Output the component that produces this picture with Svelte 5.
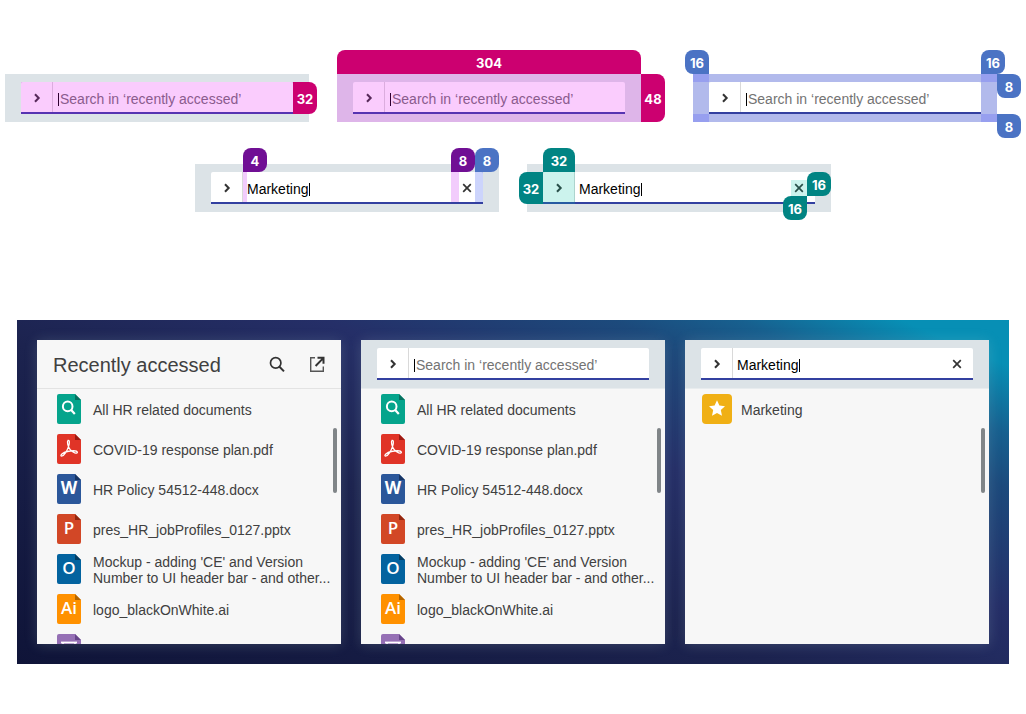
<script>
  const documents = [
    { kind: 'search', color: '#05a48c', fold: '#06705f', label: 'All HR related documents' },
    { kind: 'pdf', color: '#e03427', fold: '#9c1a12', label: 'COVID-19 response plan.pdf' },
    { kind: 'letter', color: '#2b579a', fold: '#173564', letter: 'W', weight: 700, label: 'HR Policy 54512-448.docx' },
    { kind: 'letter', color: '#d24726', fold: '#92270f', letter: 'P', weight: 600, label: 'pres_HR_jobProfiles_0127.pptx' },
    { kind: 'letter', color: '#03639f', fold: '#053d62', letter: 'O', weight: 600, label: "Mockup - adding 'CE' and Version Number to UI header bar - and other..." },
    { kind: 'letter', color: '#ff9100', fold: '#b36500', letter: 'Ai', weight: 600, label: 'logo_blackOnWhite.ai' },
    { kind: 'board', color: '#9570b5', fold: '#67458a', label: '' }
  ];
</script>

{#snippet searchBar(value)}
  <div class="bar">
    <div class="search">
      <button class="toggle" aria-label="Collapse search">
        <svg width="16" height="16" viewBox="0 0 16 16"><path d="M6 5.2 L9.7 9 L6 12.8" fill="none" stroke="#333" stroke-width="2" /></svg>
      </button>
      {#if value}
        <input class="filled" type="text" aria-label="Search in recently accessed" {value} />
        <span class="caret"></span>
        <button class="clear" aria-label="Clear">
          <svg width="16" height="16" viewBox="0 0 16 16"><path d="M4.2 5.2 L11.8 12.8 M11.8 5.2 L4.2 12.8" fill="none" stroke="#333" stroke-width="1.7" /></svg>
        </button>
      {:else}
        <span class="caret lead"></span>
        <input type="text" aria-label="Search in recently accessed" placeholder="Search in ‘recently accessed’" />
      {/if}
    </div>
  </div>
{/snippet}

{#snippet docIcon(doc)}
  <svg class="doc" width="24" height="30" viewBox="0 0 24 30" aria-hidden="true">
    <path d="M2 0 H18 L24 6 V28 A2 2 0 0 1 22 30 H2 A2 2 0 0 1 0 28 V2 A2 2 0 0 1 2 0 Z" fill={doc.color} />
    <path d="M18 0 L24 6 H18 Z" fill={doc.fold} />
    {#if doc.kind === 'search'}
      <circle cx="10.7" cy="12.4" r="4.8" fill="none" stroke="#fff" stroke-width="2" />
      <path d="M14 15.8 L17.8 20" stroke="#fff" stroke-width="2.2" />
    {:else if doc.kind === 'pdf'}
      <path d="M11 6.4 C12.8 5.6 12.6 9.5 11.6 12.4 C10.2 16.6 7 22 4.6 22.2 C2.4 21.8 5.6 18.6 10.4 17.5 C15 16.5 20 16.6 20.4 18.3 C20.3 20.2 15.8 18.6 13.2 15.6 C10.8 12.8 9.8 7.4 11 6.4 Z" fill="none" stroke="#fff" stroke-width="1.3" />
    {:else if doc.kind === 'board'}
      <path d="M4 8.5 H20" stroke="#fff" stroke-width="1.8" />
      <path d="M6 9 V17 H18 V9 M12 17 V22" fill="none" stroke="#fff" stroke-width="1.4" />
    {:else}
      <text x="12" y="20" text-anchor="middle" font-family="Open Sans, sans-serif" font-size="17" font-weight={doc.weight} fill="#fff">{doc.letter}</text>
    {/if}
  </svg>
{/snippet}

{#snippet documentList()}
  <ul class="list">
    {#each documents as doc}
      <li>
        <span class="slot">{@render docIcon(doc)}</span>
        {#if doc.label}<a href="#doc">{doc.label}</a>{/if}
      </li>
    {/each}
  </ul>
{/snippet}

<main>
  <section class="row">
    <figure class="height-spec">
      {@render searchBar('')}
      <i class="area pink field"></i>
      <b class="tag magenta field-height">32</b>
    </figure>
    <figure class="size-spec">
      {@render searchBar('')}
      <i class="area pink whole"></i>
      <b class="tag magenta bar-width">304</b>
      <b class="tag magenta bar-height">48</b>
    </figure>
    <figure class="padding-spec">
      {@render searchBar('')}
      <i class="area blue top"></i>
      <i class="area blue bottom"></i>
      <i class="area blue left"></i>
      <i class="area blue right"></i>
      <b class="tag royal pad-left">16</b>
      <b class="tag royal pad-right">16</b>
      <b class="tag royal pad-top">8</b>
      <b class="tag royal pad-bottom">8</b>
    </figure>
  </section>

  <section class="row inner">
    <figure>
      {@render searchBar('Marketing')}
      <i class="area violet text-gap"></i>
      <i class="area violet clear-gap"></i>
      <i class="area sky end-gap"></i>
      <b class="tag purple text-tag">4</b>
      <b class="tag purple clear-tag">8</b>
      <b class="tag royal end-tag">8</b>
    </figure>
    <figure class="target-spec">
      {@render searchBar('Marketing')}
      <i class="area mint toggle-area"></i>
      <i class="area mint clear-area"></i>
      <b class="tag teal toggle-width">32</b>
      <b class="tag teal toggle-height">32</b>
      <b class="tag teal clear-height">16</b>
      <b class="tag teal clear-width">16</b>
    </figure>
  </section>

  <section class="stage">
    <article class="panel">
      <header>
        <h2>Recently accessed</h2>
        <button aria-label="Search">
          <svg width="20" height="20" viewBox="0 0 20 20"><circle cx="8.7" cy="8.9" r="5.2" fill="none" stroke="#333" stroke-width="1.7" /><path d="M12.2 12.5 L17 17.4" stroke="#333" stroke-width="2" /></svg>
        </button>
        <button aria-label="Open in new window">
          <svg width="20" height="20" viewBox="0 0 20 20"><path d="M8 3.7 H3.7 V17.3 H16.3 V12.5" fill="none" stroke="#555" stroke-width="1.4" /><path d="M8.6 12 L16 4.4 M10.5 3.8 H16.5 V9.8" fill="none" stroke="#333" stroke-width="2" /></svg>
        </button>
      </header>
      {@render documentList()}
      <span class="thumb"></span>
    </article>

    <article class="panel">
      {@render searchBar('')}
      {@render documentList()}
      <span class="thumb"></span>
    </article>

    <article class="panel">
      {@render searchBar('Marketing')}
      <ul class="list">
        <li>
          <span class="slot">
            <svg width="30" height="30" viewBox="0 0 30 30" aria-hidden="true">
              <rect width="30" height="30" rx="4" fill="#f0b015" />
              <path d="M15 6.3 L17.4 11.6 L23 12.2 L18.8 16.1 L20 21.8 L15 19 L10 21.8 L11.2 16.1 L7 12.2 L12.6 11.6 Z" fill="#fff" />
            </svg>
          </span>
          <a href="#doc">Marketing</a>
        </li>
      </ul>
      <span class="thumb"></span>
    </article>
  </section>
</main>

<style>
  :global(body) {
    margin: 0;
    background: #fff;
  }

  main {
    padding: 50px 0;
    font: 14px/16px 'Liberation Sans', Arial, sans-serif;
    color: #404040;
  }

  button {
    display: flex;
    align-items: center;
    justify-content: center;
    padding: 0;
    border: 0;
    background: none;
  }

  .row {
    display: flex;
    justify-content: center;
    gap: 20px;
    margin-bottom: 26px;
  }

  figure {
    position: relative;
    width: 304px;
    margin: 0;
    padding-top: 24px;
  }

  .inner figure { padding-top: 16px; }
  .height-spec { padding-right: 8px; }
  .size-spec { padding-right: 24px; }
  .padding-spec { padding-left: 8px; padding-right: 24px; }
  .target-spec { padding-left: 8px; }

  .bar {
    padding: 8px 16px;
    background: #dce3e7;
  }

  .search {
    display: flex;
    align-items: center;
    box-sizing: border-box;
    height: 32px;
    border-bottom: 2px solid #3340a0;
    border-radius: 2px 2px 0 0;
    background: #fff;
  }

  .toggle {
    box-sizing: border-box;
    width: 32px;
    height: 100%;
    margin-right: 4px;
    border-right: 1px solid #d9d9d9;
  }

  .clear {
    width: 16px;
    height: 16px;
    margin: 0 8px 0 auto;
  }

  input {
    flex: 1;
    min-width: 0;
    height: 24px;
    padding: 4px 0 0;
    box-sizing: border-box;
    border: 0;
    outline: 0;
    background: none;
    font: inherit;
    color: #000;
  }

  input.filled {
    flex: none;
    padding-right: 1px;
    field-sizing: content;
  }

  input::placeholder {
    color: #737373;
    opacity: 1;
  }

  .caret {
    width: 1px;
    height: 13px;
    margin-top: 4px;
    background: #000;
  }

  .caret.lead {
    margin-left: 1px;
    margin-right: 1px;
  }

  .area {
    position: absolute;
    pointer-events: none;
  }

  .pink { background: rgba(230, 0, 245, 0.2); }
  .blue { background: rgba(100, 110, 245, 0.35); }
  .violet { background: rgba(190, 0, 240, 0.2); }
  .sky { background: rgba(0, 40, 240, 0.2); }
  .mint { background: rgba(0, 195, 165, 0.2); }

  .field { left: 16px; top: 32px; width: 272px; height: 32px; }
  .whole { left: 0; top: 24px; width: 304px; height: 48px; }
  .top { left: 8px; top: 24px; width: 304px; height: 8px; }
  .bottom { left: 8px; top: 64px; width: 304px; height: 8px; }
  .left { left: 8px; top: 24px; width: 16px; height: 48px; }
  .right { left: 296px; top: 24px; width: 16px; height: 48px; }
  .text-gap { left: 48px; top: 24px; width: 4px; height: 30px; }
  .clear-gap { left: 256px; top: 24px; width: 8px; height: 30px; }
  .end-gap { left: 280px; top: 24px; width: 8px; height: 30px; }
  .toggle-area { left: 24px; top: 24px; width: 32px; height: 32px; }
  .clear-area { left: 272px; top: 32px; width: 16px; height: 16px; }

  .tag {
    position: absolute;
    display: flex;
    align-items: center;
    justify-content: center;
    box-sizing: border-box;
    width: 24px;
    height: 24px;
    padding-top: 2px;
    border-radius: 8px;
    font-family: Inter, sans-serif;
    font-size: 13px;
    font-weight: 700;
    color: #fff;
  }

  .magenta { background: #cc0070; }
  .royal { background: #4b73c4; }
  .purple { background: #700f94; }
  .teal { background: #018483; }

  .field-height { left: 288px; top: 32px; height: 32px; border-radius: 0 8px 8px 0; }
  .bar-width { left: 0; top: 0; width: 304px; border-radius: 8px 8px 0 0; }
  .bar-height { left: 304px; top: 24px; height: 48px; border-radius: 0 8px 8px 0; }
  .pad-left { left: 0; top: 0; border-bottom-right-radius: 0; }
  .pad-right { left: 296px; top: 0; border-bottom-left-radius: 0; }
  .pad-top { left: 312px; top: 24px; border-top-left-radius: 0; }
  .pad-bottom { left: 312px; top: 64px; border-top-left-radius: 0; }
  .text-tag { left: 48px; top: 0; border-bottom-left-radius: 0; }
  .clear-tag { left: 256px; top: 0; border-bottom-left-radius: 0; }
  .end-tag { left: 280px; top: 0; border-bottom-left-radius: 0; }
  .toggle-width { left: 24px; top: 0; width: 32px; border-radius: 8px 8px 0 0; }
  .toggle-height { left: 0; top: 24px; height: 32px; border-radius: 8px 0 0 8px; }
  .clear-height { left: 288px; top: 24px; border-bottom-left-radius: 0; }
  .clear-width { left: 264px; top: 48px; border-top-right-radius: 0; }

  .stage {
    display: grid;
    grid-template-columns: repeat(3, 1fr);
    gap: 20px;
    margin: 108px 17px 0;
    padding: 20px;
    background: linear-gradient(203deg, #078fb5 6%, #17608f 15%, #1c4a7c 22%, #252f68 38%, #1c234f 58%, #0f1438 100%);
  }

  .panel {
    position: relative;
    height: 304px;
    overflow: hidden;
    background: #f7f7f7;
    box-shadow: 0 1px 12px rgba(180, 210, 210, 0.2);
  }

  header {
    display: flex;
    align-items: center;
    height: 48px;
    padding: 0 4px 0 16px;
    border-bottom: 1px solid #e3e3e3;
  }

  .panel > .bar { border-bottom: 1px solid #e8ecee; }

  h2 {
    flex: 1;
    margin: 0;
    padding-top: 2px;
    font-size: 20px;
    line-height: 24px;
    font-weight: 400;
  }

  header button {
    width: 40px;
    height: 40px;
  }

  .list {
    margin: 0;
    padding: 0 4px 0 16px;
    list-style: none;
  }

  li {
    display: flex;
    align-items: center;
    gap: 8px;
    height: 40px;
  }

  .slot {
    display: flex;
    flex: none;
    justify-content: center;
    width: 32px;
  }

  a {
    padding-top: 2px;
    color: inherit;
    text-decoration: none;
  }

  .thumb {
    position: absolute;
    top: 88px;
    right: 4px;
    width: 4px;
    height: 65px;
    border-radius: 2px;
    background: #808588;
  }
</style>
